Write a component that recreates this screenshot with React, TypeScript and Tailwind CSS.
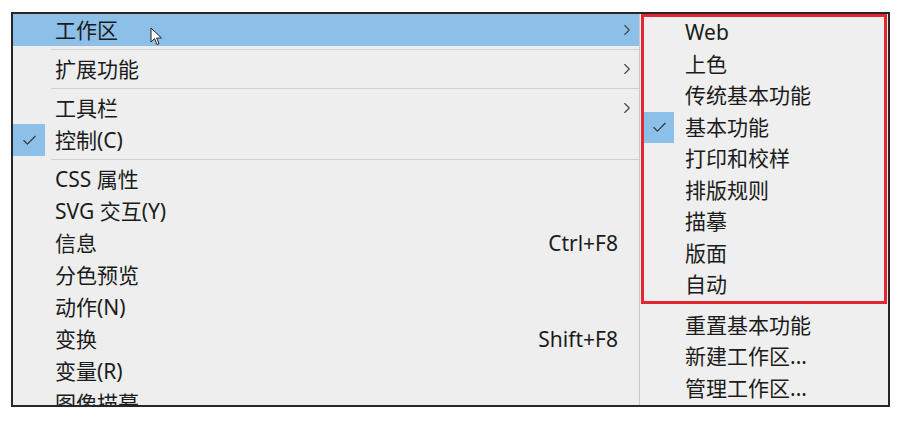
import React from 'react';
import { Check, ChevronRight } from 'lucide-react';

type LeftItem =
  | { type: 'sep' }
  | { type: 'item'; label: string; active?: boolean; checked?: boolean; sub?: boolean; shortcut?: string };

const leftItems: LeftItem[] = [
  { type: 'item', label: '工作区', active: true, sub: true },
  { type: 'sep' },
  { type: 'item', label: '扩展功能', sub: true },
  { type: 'sep' },
  { type: 'item', label: '工具栏', sub: true },
  { type: 'item', label: '控制(C)', checked: true },
  { type: 'sep' },
  { type: 'item', label: 'CSS 属性' },
  { type: 'item', label: 'SVG 交互(Y)' },
  { type: 'item', label: '信息', shortcut: 'Ctrl+F8' },
  { type: 'item', label: '分色预览' },
  { type: 'item', label: '动作(N)' },
  { type: 'item', label: '变换', shortcut: 'Shift+F8' },
  { type: 'item', label: '变量(R)' },
  { type: 'item', label: '图像描摹' },
];

const workspaces = ['Web', '上色', '传统基本功能', '基本功能', '打印和校样', '排版规则', '描摹', '版面', '自动'];
const actions = ['重置基本功能', '新建工作区...', '管理工作区...'];

const Cursor: React.FC = () => (
  <svg width="13" height="19" viewBox="0 0 13 19" className="absolute left-[137px] top-[13px]">
    <path d="M1 1 L1 15 L4.5 11.5 L7 17.5 L9 16.6 L6.6 11 L11.5 11 Z" fill="#fff" stroke="#222" strokeWidth="1" strokeLinejoin="round" />
  </svg>
);

const App: React.FC = () => {
  return (
    <div
      className="w-[913px] h-[427px] bg-white pt-[12px] pl-[11px] text-[#1b1b1b] text-[21px]"
      style={{ fontFamily: '"Noto Sans", "Noto Sans CJK SC", sans-serif' }}
    >
      <div className="relative flex w-[879px] h-[395px] border-2 border-[#262626] bg-[#eeeeee] overflow-hidden">
        {/* main menu */}
        <div className="w-[626px] shrink-0 flex flex-col">
          {leftItems.map((it, i) =>
            it.type === 'sep' ? (
              <div key={i} className="h-[7px] shrink-0 flex items-center pl-[38px]">
                <div className="h-px w-full bg-[#d2d2d2]" />
              </div>
            ) : (
              <div
                key={i}
                className={`h-[32px] shrink-0 flex items-center ${it.active ? 'bg-[#8dc0e9]' : ''}`}
              >
                <div className={`w-[32px] h-full flex items-center justify-center ${it.checked ? 'bg-[#8dc0e9]' : ''}`}>
                  {it.checked && <Check size={17} strokeWidth={1.6} className="text-[#333]" />}
                </div>
                <span className="ml-[10px] leading-none">{it.label}</span>
                <span className="ml-auto leading-none flex items-center">
                  {it.shortcut && <span className="mr-[21px]">{it.shortcut}</span>}
                  {it.sub && <ChevronRight size={18} strokeWidth={1.5} className="mr-[3px] text-[#444]" />}
                </span>
              </div>
            )
          )}
        </div>
        <div className="w-px bg-[#c9c9c9] shrink-0" />
        {/* workspace submenu */}
        <div className="flex-1 flex flex-col px-[1px] bg-[#efefef]">
          <div className="border-[3px] border-[#e3262f] flex flex-col shrink-0">
            {workspaces.map((w) => (
              <div key={w} className="h-[31.5px] shrink-0 flex items-center">
                <div className={`w-[30px] h-full flex items-center justify-center ${w === '基本功能' ? 'bg-[#8dc0e9]' : ''}`}>
                  {w === '基本功能' && <Check size={17} strokeWidth={1.6} className="text-[#333]" />}
                </div>
                <span className="ml-[11px] leading-none">{w}</span>
              </div>
            ))}
          </div>
          <div className="mt-[6px] flex flex-col shrink-0">
            {actions.map((a) => (
              <div key={a} className="h-[31.5px] shrink-0 flex items-center pl-[44px] leading-none">
                {a}
              </div>
            ))}
          </div>
        </div>
        <Cursor />
      </div>
    </div>
  );
};

export default App;
